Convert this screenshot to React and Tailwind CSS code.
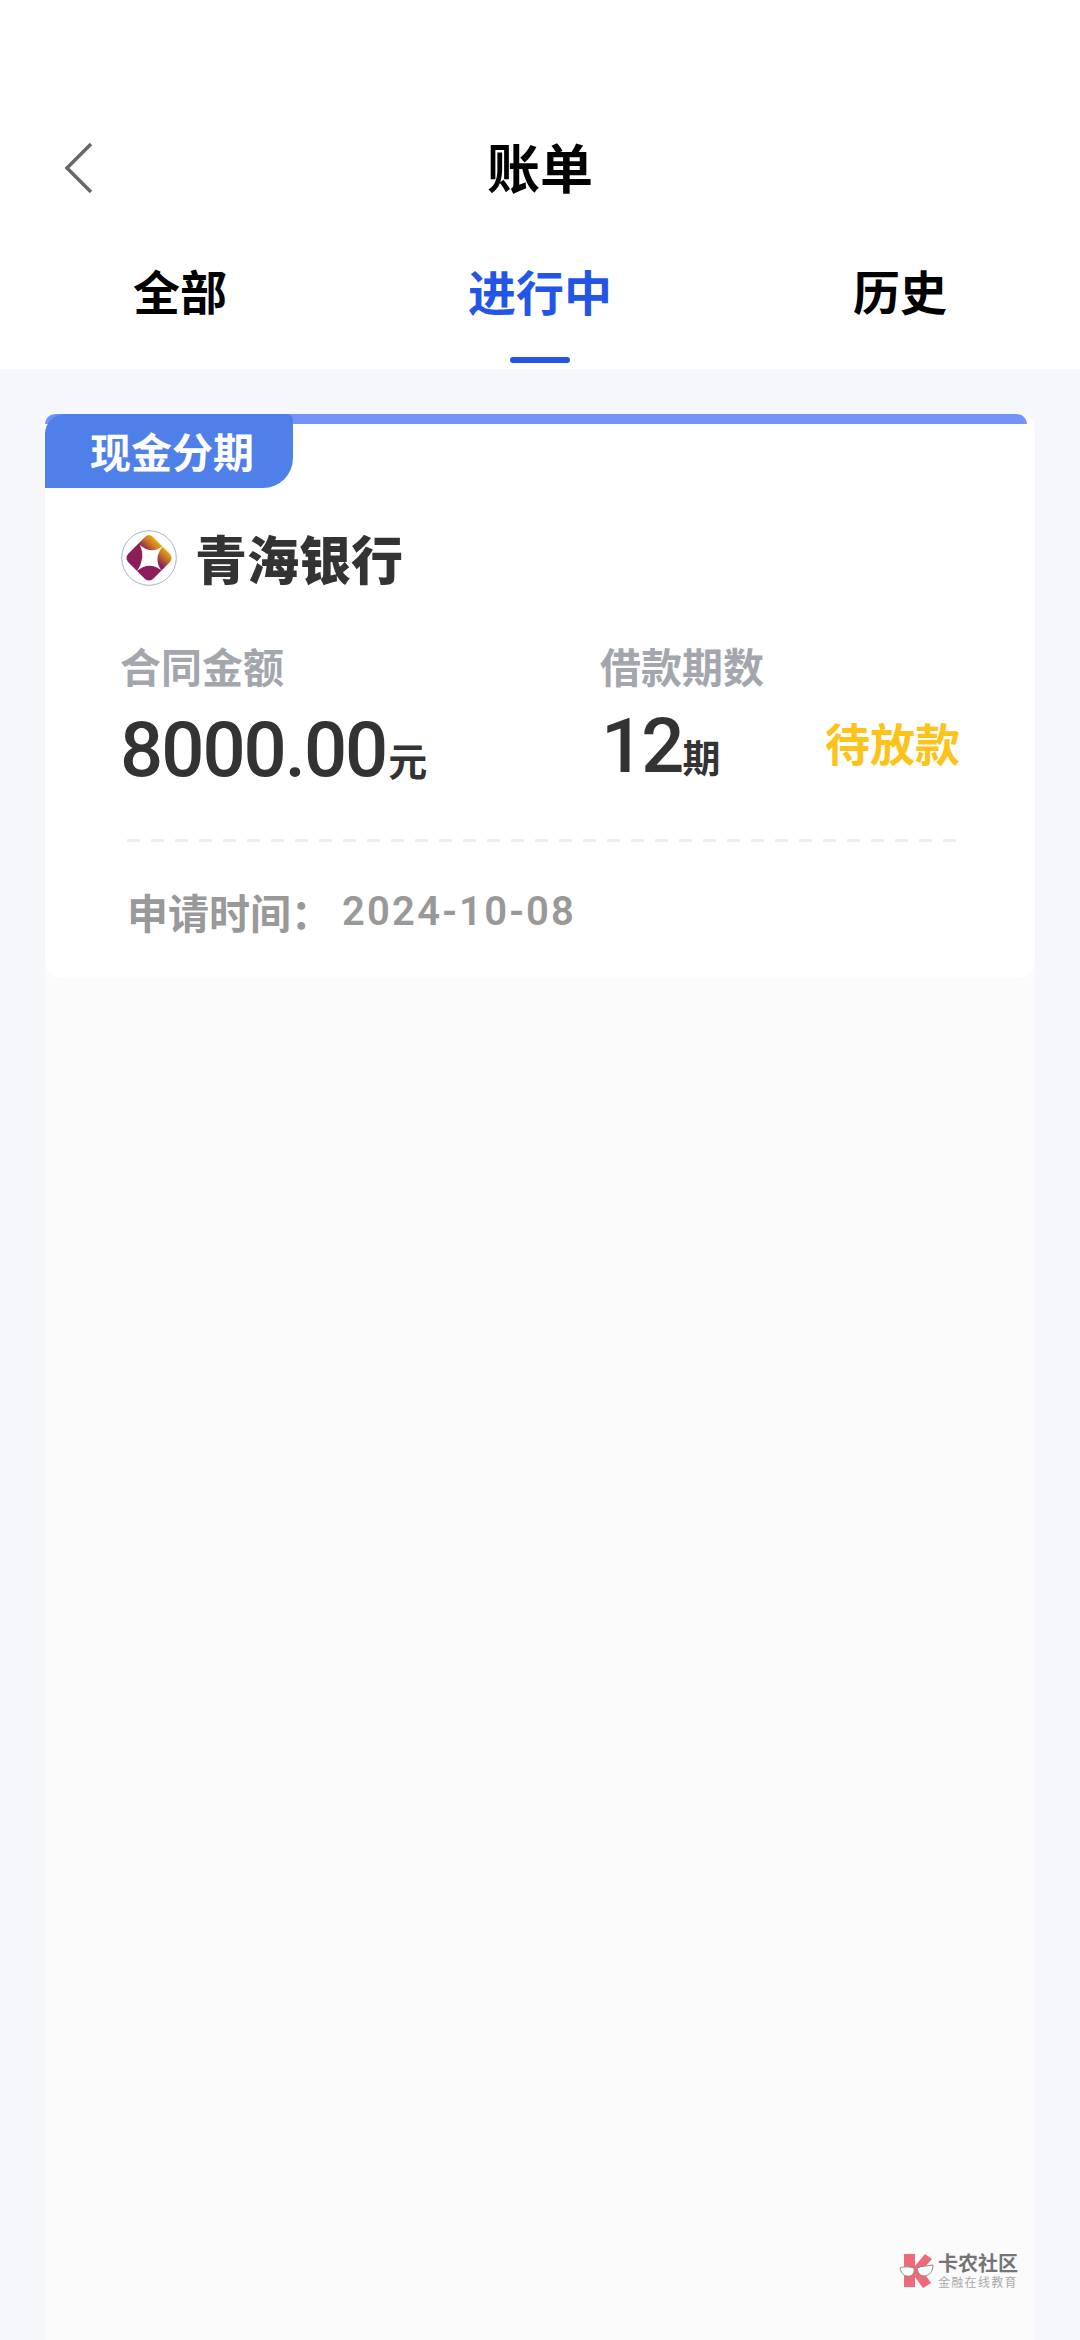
const cjk = "font-['Noto_Sans_CJK_SC',sans-serif]";
const num = "font-['Roboto','Noto_Sans_CJK_SC',sans-serif]";

function BankLogo() {
  return (
    <svg width="56" height="56" viewBox="0 0 56 56" className="shrink-0">
      <defs>
        <linearGradient id="bank" x1="0.85" y1="0.1" x2="0.2" y2="0.8" gradientUnits="objectBoundingBox">
          <stop offset="0.08" stopColor="#f5c400" />
          <stop offset="0.3" stopColor="#c9742a" />
          <stop offset="0.5" stopColor="#8d1f56" />
          <stop offset="1" stopColor="#8a1c5c" />
        </linearGradient>
      </defs>
      <circle cx="28" cy="28" r="27.3" fill="#fff" stroke="#a9b3c6" strokeWidth="1" />
      <path d="M28 5 Q30 5 32 7 L49 24 Q52 28 49 32 L32 49 Q28 52 24 49 L7 32 Q4 28 7 24 L24 7 Q26 5 28 5Z" fill="url(#bank)" />
      <path d="M19 15 Q30 25 42 16 Q32 28 40 40 Q28 31 16 41 Q25 28 19 15Z" fill="#fff" />
    </svg>
  );
}

function ForumLogo() {
  return (
    <svg width="36" height="36" viewBox="0 0 36 36" className="shrink-0">
      <path d="M5 1 L16 1 L16 13 L26 1 L33 6 L23 17 L32 30 L24 35 L16 24 L16 34 L5 34Z" fill="#ee6a78" />
      <path d="M1 15 C5 13 11 14 15 15 C16 20 13 24 8 23 C4 23 2 19 1 15Z" fill="#fff" stroke="#8a8a8a" strokeWidth="1" />
      <path d="M18 15 C23 13 28 13 34 12 C34 18 31 22 26 23 C21 23 19 20 18 15Z" fill="#fff" stroke="#8a8a8a" strokeWidth="1" />
    </svg>
  );
}

export default function App() {
  return (
    <div className={`relative h-[2340px] overflow-hidden bg-[#f5f7fb] flex flex-col ${cjk}`}>
      <div className="bg-white h-[369px] shrink-0 pt-[127px]">
        <div className="relative h-[78px] flex items-center justify-center">
          <svg width="30" height="52" viewBox="0 0 30 52" className="absolute left-[64px] top-[15px]">
            <path d="M27 2 L3 26 L27 50" fill="none" stroke="#666666" strokeWidth="3.5" />
          </svg>
          <span className="text-[53px] leading-[78px] font-bold text-black">账单</span>
        </div>
        <div className="grid grid-cols-3 mt-[50px]">
          <div className="flex justify-center">
            <span className="text-[47px] leading-[70px] font-bold text-black">全部</span>
          </div>
          <div className="flex flex-col items-center">
            <span className="text-[48px] leading-[70px] font-bold text-[#2355e6]">进行中</span>
            <div className="w-[60px] h-[6px] rounded-full bg-[#2355e6] mt-[32px]"></div>
          </div>
          <div className="flex justify-center">
            <span className="text-[47px] leading-[70px] font-bold text-black">历史</span>
          </div>
        </div>
      </div>

      <div className="flex-1 mx-[45px] mt-[45px] bg-[#fbfbfc] rounded-t-[14px]">
        <div className="relative bg-white h-[564px] rounded-[18px]">
          <div className="h-[10px] mr-[8px] bg-[#7393f5] rounded-t-[14px]"></div>
          <div className="absolute left-0 top-0 w-[248px] h-[74px] bg-[#4f80ea] rounded-tl-[20px] rounded-br-[30px] rounded-tr-[6px] flex items-center pl-[45px]">
            <span className="text-[41px] leading-none font-bold text-white -translate-y-[1px]">现金分期</span>
          </div>

          <div className="pl-[76px] pr-[75px] pt-[106px]">
            <div className="flex items-center gap-[18px] h-[56px]">
              <BankLogo />
              <span className="text-[52px] leading-none font-black text-[#333333]">青海银行</span>
            </div>

            <div className="flex mt-[49px]">
              <div className="w-[479px]">
                <div className="text-[41px] leading-[60px] text-[#a3a7ad] font-bold -ml-[1px]">合同金额</div>
                <div className="flex items-baseline mt-[19px] h-[72px]">
                  <span className={`text-[76px] leading-[72px] font-medium text-[#333333] tracking-[-2px] -ml-[1px] ${num}`}>8000.00</span>
                  <span className="text-[39px] leading-none font-bold text-[#333333] ml-[2px]">元</span>
                </div>
              </div>
              <div className="flex-1">
                <div className="text-[41px] leading-[60px] text-[#a3a7ad] font-bold">借款期数</div>
                <div className="flex items-baseline justify-between mt-[15px] h-[72px]">
                  <div className="flex items-baseline">
                    <span className={`text-[76px] leading-[72px] font-medium text-[#333333] ml-[1px] tracking-[-3px] ${num}`}>12</span>
                    <span className="text-[38px] leading-none font-bold text-[#333333] ml-[1px]">期</span>
                  </div>
                  <span className="text-[45px] leading-none font-bold text-[#fcc31a] -translate-y-[10px]">待放款</span>
                </div>
              </div>
            </div>

            <div className="ml-[6px] h-[3px] mt-[53px] bg-[repeating-linear-gradient(90deg,#eeeeee_0px,#eeeeee_13px,transparent_13px,transparent_24px)]"></div>

            <div className="flex items-center mt-[45px] ml-[6px] h-[48px] text-[#999999]">
              <span className="text-[41px] leading-none font-bold w-[215px]">申请时间：</span>
              <span className={`text-[40px] leading-none font-semibold tracking-[2.2px] translate-y-[1px] ${num}`}>2024-10-08</span>
            </div>
          </div>
        </div>
      </div>

      <div className="absolute left-[899px] top-[2252px] flex items-center gap-[3px]">
        <ForumLogo />
        <div className="flex flex-col">
          <span className="text-[20px] leading-[22px] font-bold text-[#757575]">卡农社区</span>
          <span className="text-[12px] leading-[15px] tracking-[1.3px] text-[#aaaaaa]">金融在线教育</span>
        </div>
      </div>
    </div>
  );
}
